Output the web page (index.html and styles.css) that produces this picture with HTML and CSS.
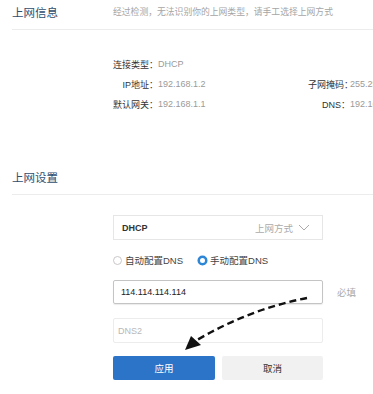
FILE: index.html
```html
<!DOCTYPE html>
<html lang="zh-CN">
<head>
<meta charset="utf-8">
<title>上网设置</title>
<link rel="stylesheet" href="styles.css">
</head>
<body>
<div class="page">
  <section class="block">
    <div class="block-head">
      <h2>上网信息</h2>
      <span class="hint">经过检测，无法识别你的上网类型，请手工选择上网方式</span>
    </div>
    <div class="info">
      <span class="lbl">连接类型：</span><span class="val">DHCP</span><span></span><span></span>
      <span class="lbl">IP地址：</span><span class="val">192.168.1.2</span><span class="lbl">子网掩码：</span><span class="val">255.255.255.0</span>
      <span class="lbl">默认网关：</span><span class="val">192.168.1.1</span><span class="lbl">DNS：</span><span class="val">192.168.1.1</span>
    </div>
  </section>

  <section class="block block-set">
    <div class="block-head">
      <h2>上网设置</h2>
    </div>
    <div class="form">
      <div class="select">
        <span class="select-val">DHCP</span>
        <span class="select-lbl">上网方式
          <svg class="chev" width="12" height="7" viewBox="0 0 12 7"><path d="M1 1 L6 6 L11 1" fill="none" stroke="#aaa" stroke-width="1"/></svg>
        </span>
      </div>
      <div class="radios">
        <label class="radio"><span class="dot"></span>自动配置DNS</label>
        <label class="radio on"><span class="dot"></span>手动配置DNS</label>
      </div>
      <div class="field-row">
        <div class="input active">114.114.114.114</div>
        <span class="req">必填</span>
      </div>
      <div class="field-row">
        <div class="input empty">DNS2</div>
      </div>
      <div class="buttons">
        <button class="btn btn-ok">应用</button>
        <button class="btn btn-cancel">取消</button>
      </div>
    </div>
  </section>

  <svg class="arrow" width="373" height="394" viewBox="0 0 373 394">
    <path d="M307 298 Q250 309 197 340" fill="none" stroke="#111" stroke-width="2.4" stroke-dasharray="7 4"/>
    <path d="M185 350 L191 336 L201 345 Z" fill="#111"/>
  </svg>
</div>
</body>
</html>
```

FILE: styles.css
```css
body {
	margin: 0;
	background-color: #fff;
	overflow: hidden;
	font-family: "Liberation Sans", "Noto Sans CJK SC", sans-serif;
	}
.page {
	position: relative;
	width: 373px;
	height: 394px;
	padding-left: 12px;
	box-sizing: border-box;
	white-space: nowrap;
	}
.block-head {
	display: flex;
	align-items: center;
	height: 30px;
	padding-bottom: 6px;
	box-sizing: border-box;
	border-bottom: 1px solid #ececec;
	}
.block-head h2 {
	margin: 0;
	width: 101px;
	flex: none;
	font-size: 11.5px;
	font-weight: normal;
	color: #2f4d6e;
	}
.hint {
	font-size: 8.8px;
	color: #a5a5a5;
	}
.info {
	display: grid;
	grid-template-columns: 45px 150px 42px auto;
	grid-auto-rows: 20px;
	align-items: center;
	margin: 24px 0 0 101px;
	font-size: 9px;
	}
.info .lbl {
	text-align: right;
	color: #333;
	}
.info .val {
	color: #9a9a9a;
	}
.block-set {
	margin-top: 51px;
	}
.form {
	display: flex;
	flex-direction: column;
	margin: 20px 0 0 101px;
	font-size: 9px;
	color: #333;
	}
.select {
	display: flex;
	align-items: center;
	justify-content: space-between;
	width: 210px;
	height: 25px;
	box-sizing: border-box;
	padding: 0 12px 0 8px;
	border: 1px solid #e6e6e6;
	}
.select-val {
	font-weight: bold;
	color: #333;
	}
.select-lbl {
	display: flex;
	align-items: center;
	gap: 5px;
	font-size: 9.5px;
	color: #aaa;
	}
.radios {
	display: flex;
	align-items: center;
	height: 20px;
	margin-top: 10px;
	gap: 15px;
	font-size: 9.5px;
	color: #444;
	}
.radio {
	display: flex;
	align-items: center;
	gap: 3px;
	}
.dot {
	width: 7px;
	height: 7px;
	border-radius: 50%;
	border: 1px solid #c8c8c8;
	}
.radio.on .dot {
	width: 5px;
	height: 5px;
	border: 2px solid #2f86d6;
	background: #fff;
	box-shadow: 0 0 0 0.5px #2f86d6;
	}
.field-row {
	display: flex;
	align-items: center;
	gap: 10px;
	margin-top: 10px;
	}
.field-row + .field-row {
	margin-top: 14px;
	}
.input {
	display: flex;
	align-items: center;
	width: 210px;
	height: 25px;
	box-sizing: border-box;
	padding-left: 7px;
	border: 1px solid #ececec;
	border-radius: 2px;
	}
.input.active {
	height: 24px;
	border-color: #c4c4c4;
	box-shadow: 0 1px 1px rgba(0,0,0,0.08);
	color: #222;
	}
.input.empty {
	padding-left: 4px;
	color: #b8b8b8;
	}
.req {
	margin-left: 4px;
	font-size: 9.5px;
	color: #aaa;
	}
.buttons {
	display: flex;
	gap: 7px;
	margin-top: 13px;
	}
.btn {
	width: 102px;
	height: 24px;
	border: none;
	border-radius: 2px;
	font-family: "Liberation Sans", "Noto Sans CJK SC", sans-serif;
	font-size: 9.5px;
	}
.btn-ok {
	background-color: #2b74c7;
	color: #fff;
	}
.btn-cancel {
	width: 101px;
	background-color: #f1f1f1;
	color: #333;
	}
.arrow {
	position: absolute;
	left: 0;
	top: 0;
	pointer-events: none;
	}
```
